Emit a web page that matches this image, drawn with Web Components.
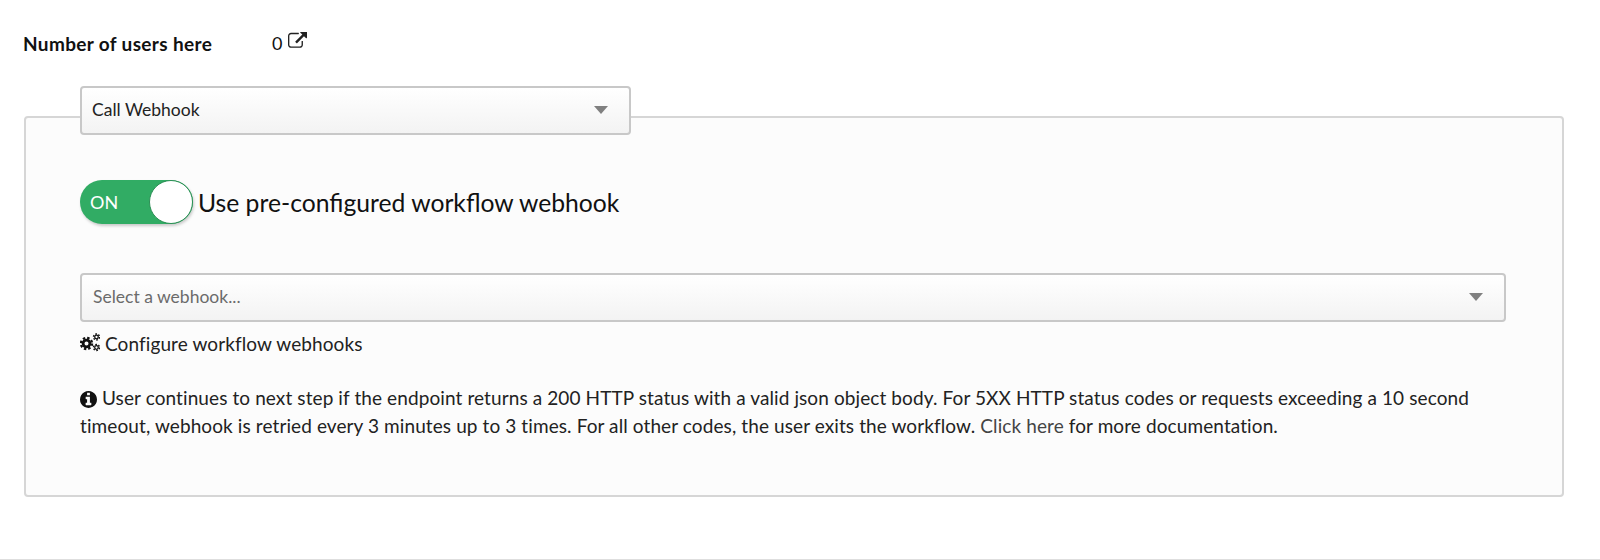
<!DOCTYPE html>
<html>
<head>
<meta charset="utf-8">
<title>Call Webhook</title>
<style>
  html, body { margin: 0; background: #fff; }
  body { font-family: "Lato", "Liberation Sans", sans-serif; color: #222; height: 560px; overflow: hidden; }
</style>
</head>
<body>
<step-editor>
  <stat-row label="Number of users here" value="0"></stat-row>
  <step-select value="Call Webhook"></step-select>
  <step-panel>
    <on-toggle>Use pre-configured workflow webhook</on-toggle>
    <step-select value="Select a webhook..." placeholder wide></step-select>
    <icon-link>Configure workflow webhooks</icon-link>
    <info-note>User continues to next step if the endpoint returns a 200 HTTP status with a valid json object body. For 5XX HTTP status codes or requests exceeding a 10 second timeout, webhook is retried every 3 minutes up to 3 times. For all other codes, the user exits the workflow. <a>Click here</a> for more documentation.</info-note>
  </step-panel>
</step-editor>

<script>
const FONT = '"Lato", "Liberation Sans", sans-serif';

class StepEditor extends HTMLElement {
  constructor() {
    super();
    this.attachShadow({ mode: "open" });
    this.shadowRoot.innerHTML = `
      <style>
        :host { display: flex; flex-direction: column; height: 560px; box-sizing: border-box; border-bottom: 1px solid #dedede; padding: 32px 36px 0 24px; font-family: ${FONT}; }
      </style>
      <slot></slot>`;
  }
}

class StatRow extends HTMLElement {
  constructor() {
    super();
    this.attachShadow({ mode: "open" });
  }
  connectedCallback() {
    this.shadowRoot.innerHTML = `
      <style>
        :host { display: flex; align-items: center; height: 22px; font-size: 18px; color: #111; margin-left: -1px; }
        b { width: 249px; font-weight: 700; font-size: 19px; letter-spacing: .35px; }
        svg { width: 19px; height: 18px; margin: -4px 0 0 6px; fill: #222; }
      </style>
      <b>${this.getAttribute("label")}</b>
      <span>${this.getAttribute("value")}</span>
      <svg viewBox="0 128 1792 1536"><path d="M1408 928v320q0 119-84.500 203.500t-203.500 84.500h-832q-119 0-203.500-84.500t-84.500-203.500v-832q0-119 84.500-203.500t203.500-84.500h704q14 0 23 9t9 23v64q0 14-9 23t-23 9h-704q-66 0-113 47t-47 113v832q0 66 47 113t113 47h832q66 0 113-47t47-113v-320q0-14 9-23t23-9h64q14 0 23 9t9 23zm384-864v512q0 26-19 45t-45 19-45-19l-176-176-652 652q-10 10-23 10t-23-10l-114-114q-10-10-10-23t10-23l652-652-176-176q-19-19-19-45t19-45 45-19h512q26 0 45 19t19 45z"/></svg>`;
  }
}

class StepSelect extends HTMLElement {
  constructor() {
    super();
    this.attachShadow({ mode: "open" });
  }
  connectedCallback() {
    const wide = this.hasAttribute("wide");
    const placeholder = this.hasAttribute("placeholder");
    this.shadowRoot.innerHTML = `
      <style>
        :host { display: flex; align-items: center; justify-content: space-between; box-sizing: border-box;
          position: relative; z-index: 1; height: 49px;
          width: ${wide ? "1426px" : "551px"}; margin: ${wide ? "0" : "32px 0 -19px 56px"};
          padding: 0 21px 0 ${wide ? "11px" : "10px"}; border: 2px solid #c8c8c8; border-radius: 4px;
          background: linear-gradient(#ffffff, #f3f3f3); font-size: 17.500px;
          color: ${placeholder ? "#6b6b6b" : "#222"}; }
        span { position: relative; top: -1px; }
        i { width: 0; height: 0; border: 7px solid transparent; border-top: 8px solid #808080; border-bottom: 0; margin-top: -2px; }
      </style>
      <span>${this.getAttribute("value")}</span><i></i>`;
  }
}

class StepPanel extends HTMLElement {
  constructor() {
    super();
    this.attachShadow({ mode: "open" });
    this.shadowRoot.innerHTML = `
      <style>
        :host { display: block; box-sizing: border-box; height: 381px; padding: 62px 56px 0 54px; background: #fcfcfc;
          border: 2px solid #d6d6d6; border-radius: 4px; }
      </style>
      <slot></slot>`;
  }
}

class OnToggle extends HTMLElement {
  constructor() {
    super();
    this.attachShadow({ mode: "open" });
    this.shadowRoot.innerHTML = `
      <style>
        :host { display: flex; align-items: center; gap: 5px; height: 44px; margin-bottom: 49px; font-size: 24.700px; color: #111; }
        .track { position: relative; box-sizing: border-box; width: 113px; height: 44px; padding-left: 10px; border-radius: 22px;
          background: #31ac64; color: #fff; font-size: 18px; line-height: 44px; box-shadow: 1px 2px 3px rgba(0,0,0,.2); }
        .knob { position: absolute; top: 0; right: 0; box-sizing: border-box; width: 44px; height: 44px; border-radius: 50%; background: #fff; border: 1px solid #2a8f54; }
      </style>
      <span class="track">ON<span class="knob"></span></span>
      <slot></slot>`;
  }
}

class IconLink extends HTMLElement {
  constructor() {
    super();
    this.attachShadow({ mode: "open" });
    this.shadowRoot.innerHTML = `
      <style>
        :host { display: flex; align-items: center; gap: 5px; height: 24px; margin: 9px 0 29px; font-size: 19px; letter-spacing: .1px; color: #222; }
        svg { width: 20px; height: 20px; }
      </style>
      <svg viewBox="0 0 20 20" fill="none" stroke="#111">
        <circle cx="6.500" cy="10.500" r="3.400" stroke-width="2.800"/>
        <circle cx="6.500" cy="10.500" r="5.600" stroke-width="2.200" stroke-dasharray="2.400 2"/>
        <circle cx="16.500" cy="4" r="1.800" stroke-width="1.300"/>
        <circle cx="16.500" cy="4" r="3" stroke-width="1.400" stroke-dasharray="1.700 1.440"/>
        <circle cx="16.500" cy="14.500" r="1.800" stroke-width="1.300"/>
        <circle cx="16.500" cy="14.500" r="3" stroke-width="1.400" stroke-dasharray="1.700 1.440"/>
      </svg>
      <slot></slot>`;
  }
}

class InfoNote extends HTMLElement {
  constructor() {
    super();
    this.attachShadow({ mode: "open" });
    this.shadowRoot.innerHTML = `
      <style>
        :host { display: block; font-size: 19px; letter-spacing: .1px; line-height: 28px; color: #222; }
        svg { width: 17px; height: 17px; fill: #111; vertical-align: -2.500px; }
        ::slotted(a) { color: #444; }
      </style>
      <svg viewBox="0 128 1536 1536"><path d="M1024 1376v-160q0-14-9-23t-23-9h-96v-512q0-14-9-23t-23-9h-320q-14 0-23 9t-9 23v160q0 14 9 23t23 9h96v320h-96q-14 0-23 9t-9 23v160q0 14 9 23t23 9h448q14 0 23-9t9-23zm-128-896v-160q0-14-9-23t-23-9h-192q-14 0-23 9t-9 23v160q0 14 9 23t23 9h192q14 0 23-9t9-23zm640 416q0 209-103 385.500t-279.500 279.500-385.500 103-385.500-103-279.500-279.500-103-385.500 103-385.500 279.500-279.500 385.500-103 385.500 103 279.500 279.500 103 385.500z"/></svg>
      <slot></slot>`;
  }
}

customElements.define("step-editor", StepEditor);
customElements.define("stat-row", StatRow);
customElements.define("step-select", StepSelect);
customElements.define("step-panel", StepPanel);
customElements.define("on-toggle", OnToggle);
customElements.define("icon-link", IconLink);
customElements.define("info-note", InfoNote);
</script>
</body>
</html>
